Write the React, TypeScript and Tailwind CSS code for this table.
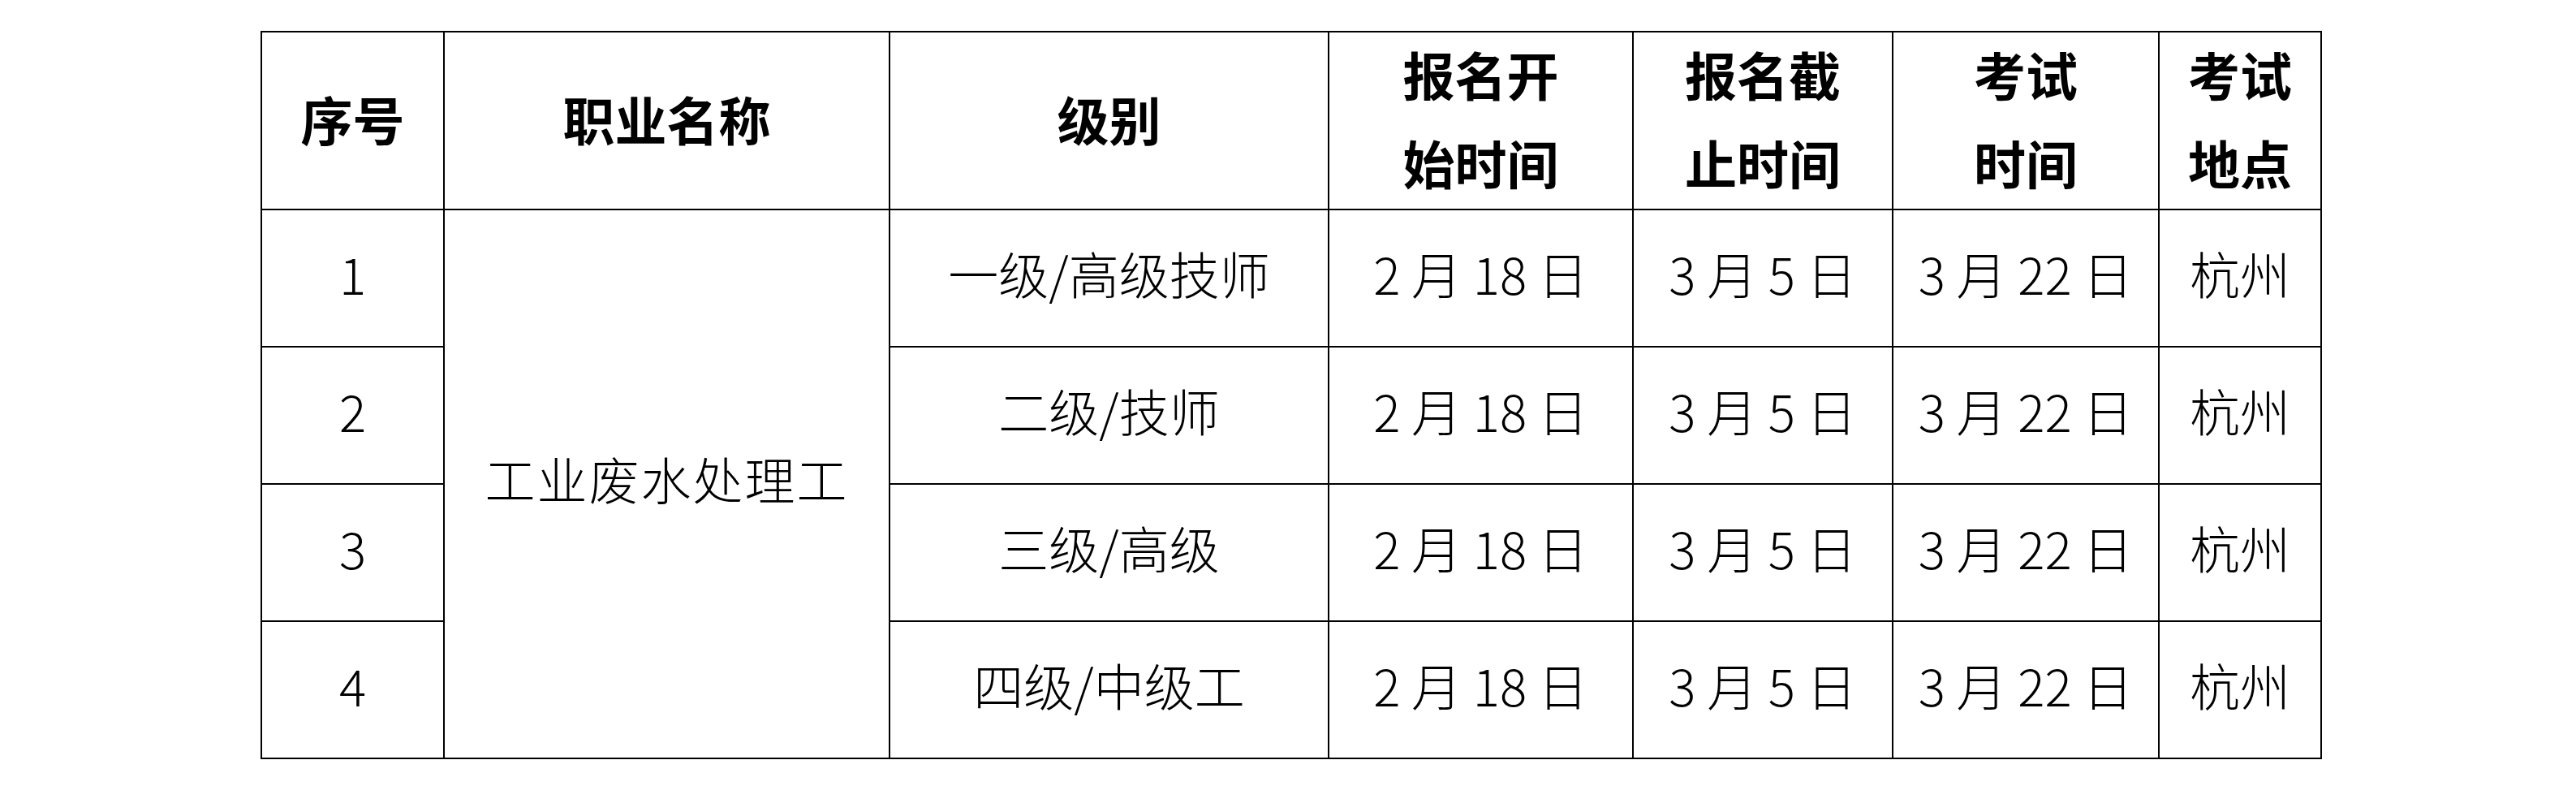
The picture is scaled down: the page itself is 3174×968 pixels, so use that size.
const LEVELS = ['一级/高级技师', '二级/技师', '三级/高级', '四级/中级工']

const head = 'border-2 border-black text-center align-middle p-0 pb-[8px]'
const cell = 'border-2 border-black text-center align-middle p-0 pb-[14px]'

function TwoLine({ top, bottom }: { top: string; bottom: string }) {
  return (
    <div className="flex flex-col items-center gap-[45px]">
      <span>{top}</span>
      <span>{bottom}</span>
    </div>
  )
}

export default function App() {
  return (
    <div className="min-h-screen bg-white pt-[38px] font-['Noto_Sans_CJK_SC',sans-serif] text-black">
      <table className="ml-[321px] w-[2538px] table-fixed border-collapse">
        <colgroup>
          <col className="w-[225px]" />
          <col className="w-[549px]" />
          <col className="w-[541px]" />
          <col className="w-[375px]" />
          <col className="w-[320px]" />
          <col className="w-[328px]" />
          <col className="w-[200px]" />
        </colgroup>
        <thead>
          <tr className="h-[219px] text-[64px] font-bold leading-none">
            <th className={head}>序号</th>
            <th className={head}>职业名称</th>
            <th className={head}>级别</th>
            <th className={head}>
              <TwoLine top="报名开" bottom="始时间" />
            </th>
            <th className={head}>
              <TwoLine top="报名截" bottom="止时间" />
            </th>
            <th className={head}>
              <TwoLine top="考试" bottom="时间" />
            </th>
            <th className={head}>
              <TwoLine top="考试" bottom="地点" />
            </th>
          </tr>
        </thead>
        <tbody className="text-[62px] font-light leading-none">
          {LEVELS.map((level, i) => (
            <tr key={level} className="h-[169px]">
              <td className={cell}>{i + 1}</td>
              {i === 0 && (
                <td rowSpan={4} className={`${cell} tracking-[2px]`}>
                  工业废水处理工
                </td>
              )}
              <td className={cell}>{level}</td>
              <td className={cell}>2 月 18 日</td>
              <td className={cell}>3 月 5 日</td>
              <td className={cell}>3 月 22 日</td>
              <td className={cell}>杭州</td>
            </tr>
          ))}
        </tbody>
      </table>
    </div>
  )
}
